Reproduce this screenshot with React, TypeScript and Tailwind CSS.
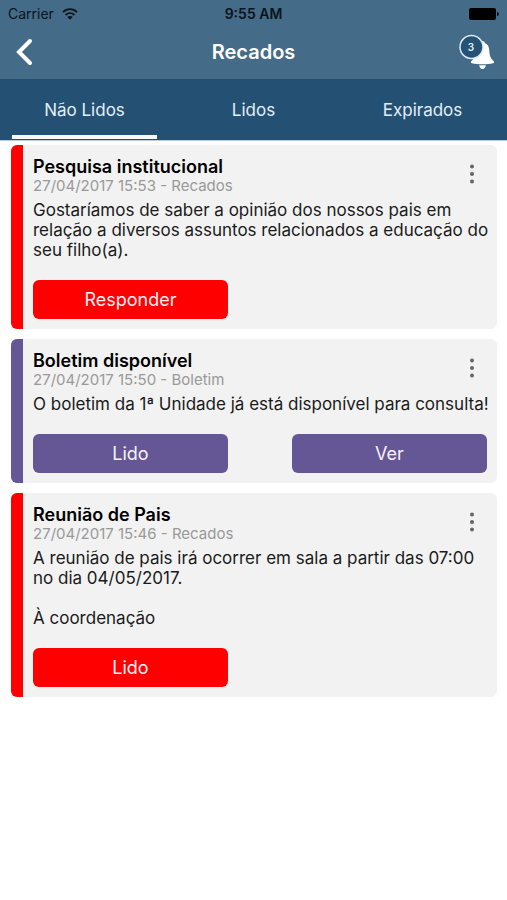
import { useState } from "react";

type Message = {
  title: string;
  meta: string;
  body: string;
  tone: "red" | "purple";
  actions: string[];
};

const tabs = ["Não Lidos", "Lidos", "Expirados"];

const messages: Message[] = [
  {
    title: "Pesquisa institucional",
    meta: "27/04/2017 15:53 - Recados",
    body: "Gostaríamos de saber a opinião dos nossos pais em relação a diversos assuntos relacionados a educação do seu filho(a).",
    tone: "red",
    actions: ["Responder"],
  },
  {
    title: "Boletim disponível",
    meta: "27/04/2017 15:50 - Boletim",
    body: "O boletim da 1ª Unidade já está disponível para consulta!",
    tone: "purple",
    actions: ["Lido", "Ver"],
  },
  {
    title: "Reunião de Pais",
    meta: "27/04/2017 15:46 - Recados",
    body: "A reunião de pais irá ocorrer em sala a partir das 07:00 no dia 04/05/2017.\n\nÀ coordenação",
    tone: "red",
    actions: ["Lido"],
  },
];

const toneClass = { red: "bg-[#ff0000]", purple: "bg-[#655795]" };

function StatusBar() {
  return (
    <div className="grid h-7 grid-cols-3 items-center px-2 text-sm text-[#0b141b]">
      <div className="flex items-center gap-2">
        <span>Carrier</span>
        <svg width="16" height="12" viewBox="0 0 16 12" fill="none" stroke="currentColor" strokeWidth="1.8" aria-hidden="true">
          <path d="M1 4.2C5 .2 11 .2 15 4.2" />
          <path d="M3.600 7C6.200 4.500 9.800 4.500 12.400 7" />
          <path d="M8 11.800 5.300 9.100C6.800 7.700 9.200 7.700 10.700 9.100Z" fill="currentColor" stroke="none" />
        </svg>
      </div>
      <span className="text-center font-semibold">9:55 AM</span>
      <svg className="justify-self-end" width="30" height="12" viewBox="0 0 30 12" fill="#000" aria-hidden="true">
        <rect width="27" height="12" rx="2" />
        <path d="M28 4c2.400.4 2.400 3.600 0 4Z" />
      </svg>
    </div>
  );
}

function NavBar() {
  return (
    <div className="grid h-[51px] grid-cols-[48px_1fr_48px] items-center pb-[3px] text-white">
      <button type="button" aria-label="Voltar" className="flex h-full items-center justify-center">
        <svg width="18" height="28" viewBox="0 0 18 28" fill="none" stroke="currentColor" strokeWidth="4" aria-hidden="true">
          <path d="M15 3 4 14 15 25" strokeLinejoin="miter" strokeLinecap="round" />
        </svg>
      </button>
      <h1 className="text-center text-xl font-semibold">Recados</h1>
      <button type="button" aria-label="Notificações: 3" className="flex h-full items-center">
        <svg width="36" height="36" viewBox="0 0 36 36" aria-hidden="true">
          <path
            d="M23.500 7c1.300 0 2.200.8 2.300 2 3.100 1.200 4.300 3.900 4.500 7.500.2 5 1.200 8.200 4.200 10.500 1 .9.800 2-.5 2.300-5.500 1.400-15.500 1.400-21 0-1.300-.3-1.500-1.400-.5-2.300 3-2.300 4-5.500 4.200-10.500.2-3.600 1.400-6.300 4.500-7.500.1-1.200 1-2 2.300-2Z"
            fill="#fff"
          />
          <path d="M20.200 31.200c2.200.2 4.400.2 6.600 0-.2 2.200-1.500 3.700-3.300 3.700s-3.100-1.500-3.300-3.700Z" fill="#fff" />
          <circle cx="12.500" cy="13" r="11.500" fill="#255375" stroke="#dce9f4" strokeWidth="1.500" />
          <text x="12" y="16.500" textAnchor="middle" fontSize="10" fontWeight="600" fill="#e6f0f8">
            3
          </text>
        </svg>
      </button>
    </div>
  );
}

function Card({ message }: { message: Message }) {
  const tone = toneClass[message.tone];
  return (
    <article className="flex overflow-hidden rounded-md bg-[#f2f2f2]">
      <div className={`w-3 shrink-0 ${tone}`} />
      <div className="min-w-0 flex-1 px-[10px] pb-[10px] pt-[11px]">
        <div className="flex justify-between">
          <div>
            <h2 className="text-lg leading-[21px] font-semibold text-black">{message.title}</h2>
            <p className="text-[15px] leading-[18px] text-[#999999]">{message.meta}</p>
          </div>
          <button type="button" aria-label="Mais opções" className="flex w-[30px] items-center justify-center pb-1">
            <svg width="4" height="20" viewBox="0 0 4 20" fill="#666" aria-hidden="true">
              <circle cx="2" cy="2.500" r="2" />
              <circle cx="2" cy="10" r="2" />
              <circle cx="2" cy="17.500" r="2" />
            </svg>
          </button>
        </div>
        <p className="-mr-[6px] mt-[5px] whitespace-pre-line text-[17px] leading-5 text-[#1a1a1a]">{message.body}</p>
        <div className="mt-5 grid grid-cols-2 gap-16">
          {message.actions.map((action) => (
            <button key={action} type="button" className={`h-[39px] rounded-md text-lg text-[#f6f1f6] ${tone}`}>
              {action}
            </button>
          ))}
        </div>
      </div>
    </article>
  );
}

export default function App() {
  const [active, setActive] = useState(0);
  return (
    <div className="min-h-screen bg-white font-['Inter','Liberation_Sans',sans-serif]">
      <header>
        <div className="bg-[#446b88]">
          <StatusBar />
          <NavBar />
        </div>
        <nav className="grid h-[62px] grid-cols-3 border-b border-[#b9cbd9] bg-[#245173]">
          {tabs.map((tab, i) => (
            <button
              key={tab}
              type="button"
              aria-pressed={active === i}
              onClick={() => setActive(i)}
              className="flex flex-col px-3 text-[17px] text-[#e3eef6]"
            >
              <span className="flex w-full flex-1 items-center justify-center pt-2">{tab}</span>
              <span className={`mb-px h-1 w-full ${active === i ? "bg-[#f4f9fd]" : "bg-transparent"}`} />
            </button>
          ))}
        </nav>
      </header>
      <main className="flex flex-col gap-[10px] pt-1 pr-[10px] pl-[11px]">
        {messages.map((message) => (
          <Card key={message.title} message={message} />
        ))}
      </main>
    </div>
  );
}
